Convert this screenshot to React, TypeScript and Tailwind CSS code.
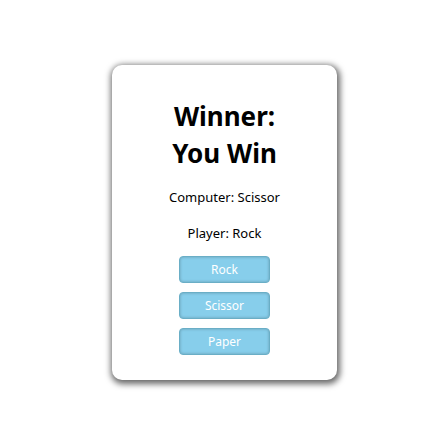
import React, { useState } from 'react';

const choices = ['Rock', 'Scissor', 'Paper'];

const App = () => {
  const [player, setPlayer] = useState('Rock');
  const [computer, setComputer] = useState('Scissor');

  const winner = () => {
    if (player === computer) return 'Draw';
    if (
      (player === 'Rock' && computer === 'Scissor') ||
      (player === 'Scissor' && computer === 'Paper') ||
      (player === 'Paper' && computer === 'Rock')
    ) {
      return 'You Win';
    }
    return 'Computer Wins';
  };

  const play = (choice: string) => {
    setPlayer(choice);
    setComputer(choices[Math.floor(Math.random() * choices.length)]);
  };

  return (
    <div className="flex min-h-screen items-center justify-center bg-white pl-[10px] pt-[3px] font-['Noto_Sans',sans-serif] text-black">
      <div className="flex h-[315px] w-[225px] flex-col items-center rounded-[10px] bg-white pt-[33px] shadow-[1px_2px_6px_2px_rgba(0,0,0,0.6)]">
        <h1 className="text-center text-[26px] font-bold leading-[37px]">
          Winner:
          <br />
          {winner()}
        </h1>
        <p className="mt-[16px] text-[13px] leading-[18px]">Computer: {computer}</p>
        <p className="mt-[18px] text-[13px] leading-[18px]">Player: {player}</p>
        <div className="mt-[14px] flex flex-col gap-[9px]">
          {choices.map((choice) => (
            <button
              key={choice}
              onClick={() => play(choice)}
              className="h-[27px] w-[91px] rounded-[4px] border border-[#6aaec6] bg-[#87ceeb] text-[12px] text-white shadow-[inset_0_0_3px_rgba(0,0,0,0.25)]"
            >
              {choice}
            </button>
          ))}
        </div>
      </div>
    </div>
  );
};

export default App;
